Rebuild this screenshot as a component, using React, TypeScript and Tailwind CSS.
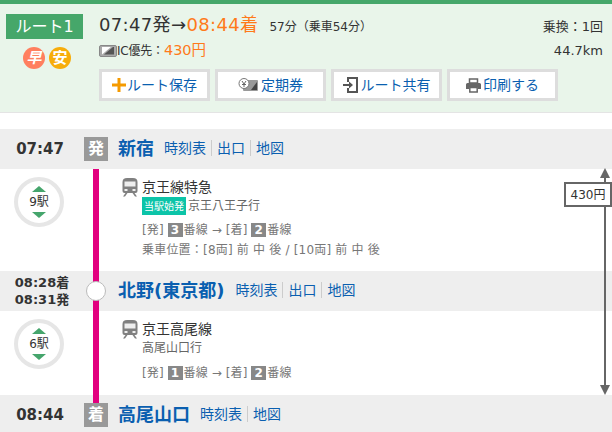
const FONT = '"DejaVu Sans", "Noto Sans CJK JP", sans-serif';

function TrainIcon() {
  return (
    <svg width="16" height="20" viewBox="0 0 16 20" className="shrink-0">
      <path d="M5 1h6c3 0 4.500 1.500 4.500 4v9a2 2 0 0 1-2 2h-11a2 2 0 0 1-2-2V5C0.500 2.500 2 1 5 1z" fill="#808080" />
      <rect x="2.500" y="4.500" width="11" height="5" fill="#eee" />
      <rect x="2.500" y="12" width="3" height="2" fill="#eee" />
      <rect x="10.500" y="12" width="3" height="2" fill="#eee" />
      <path d="M3.500 16L1 19.500H3L5.500 16zM12.500 16l2.500 3.500H13L10.500 16z" fill="#808080" />
    </svg>
  );
}

function StopCount({ count }: { count: string }) {
  return (
    <div className="w-[50px] h-[50px] rounded-full border-[4px] border-[#e6e6e6] bg-white flex flex-col items-center justify-center">
      <svg width="14" height="6" viewBox="0 0 14 6"><path d="M7 0l7 6H0z" fill="#45a56c" /></svg>
      <span className="text-[12px] leading-[18px] text-[#333] my-[1px]">{count}</span>
      <svg width="14" height="6" viewBox="0 0 14 6"><path d="M0 0h14L7 6z" fill="#45a56c" /></svg>
    </div>
  );
}

function Links({ items }: { items: string[] }) {
  return (
    <div className="flex items-center text-[14px] leading-[16px] text-[#0a5fb0] mb-[2px]">
      {items.map((item, i) => (
        <span key={item} className={i > 0 ? "border-l border-[#ccc] ml-[5px] pl-[5px]" : ""}>{item}</span>
      ))}
    </div>
  );
}

function Badge({ label }: { label: string }) {
  return (
    <div className="relative z-10 w-6 h-6 bg-[#999] text-white text-[16px] font-bold flex items-center justify-center">
      {label}
    </div>
  );
}

function Track({ no }: { no: string }) {
  return <span className="inline-block bg-[#888] text-white font-bold text-[12px] leading-[14px] w-[15px] text-center mr-[1px]">{no}</span>;
}

function ActionButton({ icon, label, w }: { icon: React.ReactNode; label: string; w: string }) {
  return (
    <div className={`${w} h-8 bg-white border-[3px] border-[#ddd] flex items-center justify-center gap-[1px] text-[14px] text-[#0a5fb0]`}>
      {icon}
      <span>{label}</span>
    </div>
  );
}

export default function App() {
  return (
    <div className="w-[612px] h-[432px] overflow-hidden bg-white text-[#333]" style={{ fontFamily: FONT }}>
      {/* Summary */}
      <div className="h-[113px] bg-[#e9f5ea] border-t-[4px] border-[#46a76a] flex pt-[10px] border-b border-b-[#e4e4e4]">
        <div className="w-[99px] pl-[6px] shrink-0">
          <div className="w-[77px] h-[25px] bg-[#46a76a] text-white text-[16px] flex items-center justify-center">ルート1</div>
          <div className="flex gap-[4px] mt-[8px] ml-[17px]">
            <div className="w-[22px] h-[22px] rounded-full bg-[#ff7f5f] text-white text-[15px] font-bold italic flex items-center justify-center">早</div>
            <div className="w-[22px] h-[22px] rounded-full bg-[#f7ad0b] text-white text-[15px] font-bold flex items-center justify-center">安</div>
          </div>
        </div>
        <div className="flex-1 -mt-[3px]">
          <div className="flex items-baseline justify-between pr-[9px] h-[27px]">
            <div className="flex items-baseline">
              <span className="text-[18px] tracking-[0.35px]">07:47発→<span className="text-[#ff7a1a]">08:44着</span></span>
              <span className="text-[12px] ml-[11px]">57分（乗車54分）</span>
            </div>
            <span className="text-[13px]">乗換：1回</span>
          </div>
          <div className="flex items-center justify-between pr-[9px] h-[26px]">
            <div className="flex items-center text-[12px]">
              <svg width="18" height="14" viewBox="0 0 18 14">
                <rect x="0.500" y="1.500" width="17" height="11" rx="1.500" fill="#aaa" stroke="#888" />
                <path d="M3 10.500L12 3H3z" fill="#fff" />
                <path d="M5 10.500L14 3h1v7.500z" fill="#555" />
              </svg>
              <span className="tracking-[-0.2px]">IC優先：</span>
              <span className="text-[14.500px] text-[#ff7a1a]">430円</span>
            </div>
            <span className="text-[13px]">44.7km</span>
          </div>
          <div className="flex gap-[5px] mt-[5px]">
            <ActionButton
              w="w-[111px]"
              label="ルート保存"
              icon={<svg width="14" height="14" viewBox="0 0 14 14"><path d="M5.500 0h3v5.500H14v3H8.500V14h-3V8.500H0v-3h5.500z" fill="#f59a00" /></svg>}
            />
            <ActionButton
              w="w-[111px]"
              label="定期券"
              icon={
                <svg width="20" height="14" viewBox="0 0 20 14" className="mr-[2px]">
                  <rect x="5" y="2" width="15" height="11" rx="1" fill="#999" />
                  <path d="M13 12l6-8v8z" fill="#444" />
                  <circle cx="6" cy="5.500" r="5" fill="#fff" stroke="#777" />
                  <path d="M4 3l2 3 2-3M6 6v3M4 6.500h4" stroke="#666" fill="none" />
                </svg>
              }
            />
            <ActionButton
              w="w-[111px]"
              label="ルート共有"
              icon={
                <svg width="15" height="16" viewBox="0 0 15 16" className="mr-[2px]">
                  <path d="M5 5V1h9v14H5v-4" fill="none" stroke="#555" strokeWidth="2" />
                  <path d="M0 7h6V4.500L10 8l-4 3.500V9H0z" fill="#555" />
                </svg>
              }
            />
            <ActionButton
              w="w-[111px]"
              label="印刷する"
              icon={
                <svg width="15" height="15" viewBox="0 0 15 15" className="mr-[1px]">
                  <path d="M3.500 1h8v4h-8z" fill="none" stroke="#666" strokeWidth="1.500" />
                  <path d="M1.500 5h12A1.500 1.500 0 0 1 15 6.500V11h-3V9H3v2H0V6.500A1.500 1.500 0 0 1 1.500 5z" fill="#666" />
                  <path d="M3.800 9.500h7.400V14H3.800z" fill="none" stroke="#666" strokeWidth="1.500" />
                </svg>
              }
            />
          </div>
        </div>
      </div>

      {/* Route */}
      <div className="relative mt-[16px]">
        <div className="absolute left-[93px] top-[40px] w-[6px] h-[234px] bg-[#e2007f] z-[1]" />
        <div className="absolute right-[4px] top-[39px] w-[7px] h-[227px] flex flex-col items-center z-[1]">
          <div className="w-0 h-0 border-x-[5px] border-x-transparent border-b-[10px] border-b-[#666]" />
          <div className="w-[2px] flex-1 bg-[#666]" />
          <div className="w-0 h-0 border-x-[5px] border-x-transparent border-t-[10px] border-t-[#666]" />
        </div>
        <div className="absolute right-0 top-[53px] w-[48px] h-[25px] border-[2px] border-[#666] bg-white z-[2] text-[12px] flex items-center justify-center">430円</div>

        <div className="h-[40px] bg-[#eee] flex items-center">
          <div className="w-[84px] text-center text-[15px] font-bold pr-[4px]">07:47</div>
          <Badge label="発" />
          <span className="text-[18px] font-bold text-[#0a5fb0] ml-[10px] mr-[10px] mb-[2px]">新宿</span>
          <Links items={["時刻表", "出口", "地図"]} />
        </div>

        <div className="h-[102px] flex">
          <div className="w-[118px] pl-[14px] pt-[8px] shrink-0"><StopCount count="9駅" /></div>
          <div className="pl-[4px] pt-[8px]">
            <div className="flex items-center gap-[4px] h-[20px]"><TrainIcon /><span className="text-[14px]">京王線特急</span></div>
            <div className="flex items-center h-[18px] pl-[20px] text-[12px] text-[#666]">
              <span className="bg-[#0cc4a8] text-white text-[10px] h-[18px] px-[2px] flex items-center mr-[2px]">当駅始発</span>
              京王八王子行
            </div>
            <div className="pl-[20px] text-[12px] leading-[20px] text-[#777] mt-[5px] tracking-[0.1px]">[発] <Track no="3" />番線 → [着] <Track no="2" />番線</div>
            <div className="pl-[20px] text-[12px] leading-[20px] text-[#777] tracking-[0.2px]">乗車位置：[8両] 前 中 後 / [10両] 前 中 後</div>
          </div>
        </div>

        <div className="h-[40px] bg-[#eee] flex items-center">
          <div className="w-[84px] text-center text-[13px] leading-[17px] font-bold">08:28着<br />08:31発</div>
          <div className="relative z-10 w-5 h-5 rounded-full bg-white border border-[#bbb] ml-[2px]" />
          <span className="text-[18px] font-bold text-[#0a5fb0] ml-[12px] mr-[11px] mb-[2px]">北野(東京都)</span>
          <Links items={["時刻表", "出口", "地図"]} />
        </div>

        <div className="h-[84px] flex">
          <div className="w-[118px] pl-[14px] pt-[8px] shrink-0"><StopCount count="6駅" /></div>
          <div className="pl-[4px] pt-[8px]">
            <div className="flex items-center gap-[4px] h-[20px]"><TrainIcon /><span className="text-[14px]">京王高尾線</span></div>
            <div className="h-[18px] pl-[20px] text-[12px] leading-[18px] text-[#666]">高尾山口行</div>
            <div className="pl-[20px] text-[12px] leading-[20px] text-[#777] mt-[6px] tracking-[0.1px]">[発] <Track no="1" />番線 → [着] <Track no="2" />番線</div>
          </div>
        </div>

        <div className="h-[40px] bg-[#eee] flex items-center">
          <div className="w-[84px] text-center text-[15px] font-bold pr-[4px]">08:44</div>
          <Badge label="着" />
          <span className="text-[18px] font-bold text-[#0a5fb0] ml-[10px] mr-[10px] mb-[2px]">高尾山口</span>
          <Links items={["時刻表", "地図"]} />
        </div>
      </div>
    </div>
  );
}
